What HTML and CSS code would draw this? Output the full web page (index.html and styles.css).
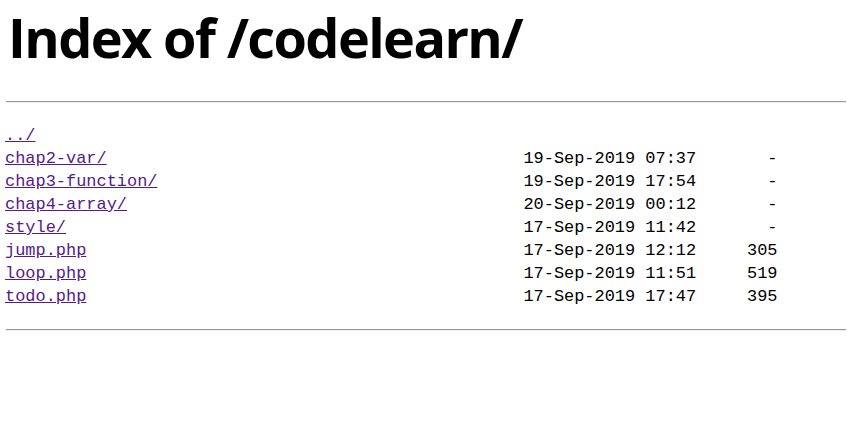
FILE: index.html
```html
<!DOCTYPE html>
<html>
<head>
<meta charset="utf-8">
<title>Index of /codelearn/</title>
<link rel="stylesheet" href="styles.css">
</head>
<body>
<h1 class="title">Index of /codelearn/</h1>
<hr class="rule">
<pre class="listing"><a href="../">../</a>
<a href="chap2-var/">chap2-var/</a>                                         19-Sep-2019 07:37       -
<a href="chap3-function/">chap3-function/</a>                                    19-Sep-2019 17:54       -
<a href="chap4-array/">chap4-array/</a>                                       20-Sep-2019 00:12       -
<a href="style/">style/</a>                                             17-Sep-2019 11:42       -
<a href="jump.php">jump.php</a>                                           17-Sep-2019 12:12     305
<a href="loop.php">loop.php</a>                                           17-Sep-2019 11:51     519
<a href="todo.php">todo.php</a>                                           17-Sep-2019 17:47     395
</pre>
<hr class="rule">
</body>
</html>
```

FILE: styles.css
```css
html, body {
  margin: 0;
  padding: 0;
  background: #ffffff;
}
body {
  padding: 0 1px 0 6px;
  color: #000;
}
.title {
  font-family: "Open Sans", "Noto Sans", sans-serif;
  font-weight: 700;
  font-size: 54px;
  letter-spacing: -1.6px;
  line-height: 74px;
  margin: 0 0 0 2px;
  padding-top: 0;
  height: 101px;
}
.rule {
  margin: 0;
  border: 0;
  border-top: 1px solid #999;
  border-bottom: 1px solid #eee;
  height: 0;
}
.listing {
  font-family: "Liberation Mono", "DejaVu Sans Mono", monospace;
  font-size: 16.95px;
  line-height: 23px;
  margin: 0 0 0 -1px;
  padding: 21px 0 21px;
  color: #000;
}
.listing a {
  color: #551a8b;
  text-decoration: underline;
}
```
